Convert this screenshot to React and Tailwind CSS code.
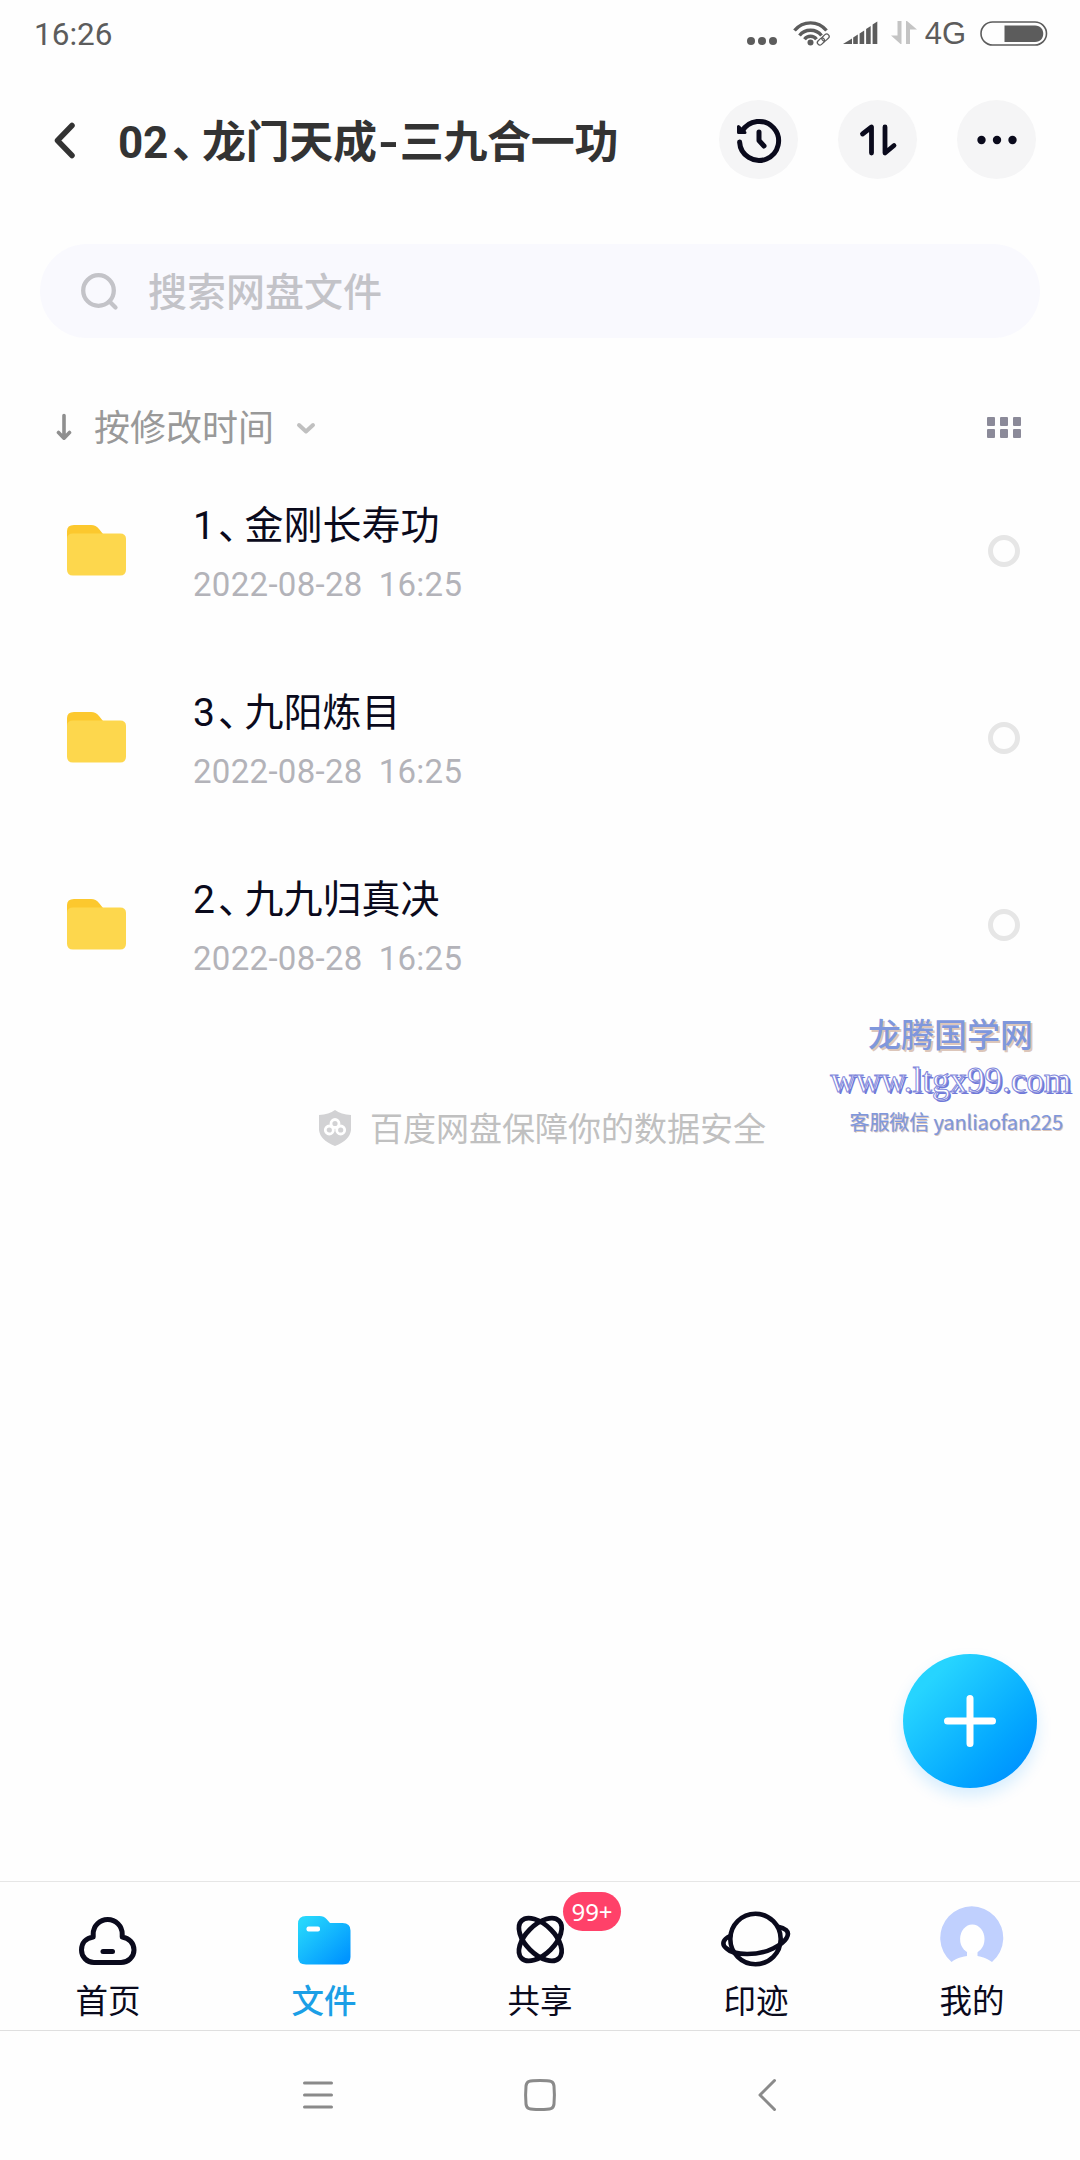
import React from "react";

const files = [
  { id: 1, index: "1", name: "金刚长寿功", date: "2022-08-28", time: "16:25" },
  { id: 2, index: "3", name: "九阳炼目", date: "2022-08-28", time: "16:25" },
  { id: 3, index: "2", name: "九九归真决", date: "2022-08-28", time: "16:25" },
];

function StatusBar() {
  return (
    <div className="h-[68px] pl-[34px] pr-[32px] flex items-center justify-between text-[#5c5c5c]">
      <span className="pt-px text-[31.5px] leading-8">16:26</span>
      <div className="flex items-center">
        <svg width="30" height="28" viewBox="0 0 30 28" fill="#5c5c5c" className="mr-4">
          <circle cx="4" cy="21" r="4" />
          <circle cx="15" cy="21" r="4" />
          <circle cx="26" cy="21" r="4" />
        </svg>
        {/* Wifi with link */}
        <svg width="38" height="28" viewBox="0 0 38 28" fill="none" className="mr-[12px]">
          <g stroke="#5c5c5c" strokeWidth="3.4">
            <path d="M1.5 10.5C10 .3 25 .3 33.5 10.5" />
            <path d="M6.5 15.5C12 8.5 23 8.5 28.5 15.5" />
            <path d="M11.5 19.3C14.5 15.3 20.5 15.3 23.5 19.3" />
          </g>
          <circle cx="17.5" cy="22.5" r="3" fill="#5c5c5c" />
          <g stroke="#5c5c5c" strokeWidth="1.3">
            <rect x="24" y="19" width="8" height="5" rx="2.5" transform="rotate(-42 28 21.5)" />
            <rect x="28.5" y="15" width="8" height="5" rx="2.5" transform="rotate(-42 32.5 17.5)" />
          </g>
        </svg>
        <svg width="35" height="28" viewBox="0 0 35 28" fill="#5c5c5c" className="mr-[13px]">
          <path d="M0 24L9 18.5V24Z" />
          <path d="M10.2 17.5L14.8 14.5V24H10.2Z" />
          <path d="M16.6 13.5L21.2 10.5V24H16.6Z" />
          <path d="M23.1 9L27.7 6V24H23.1Z" />
          <path d="M29.6 4.5L34.3 1.5V24H29.6Z" />
        </svg>
        <svg width="26" height="28" viewBox="0 0 26 28" fill="#c4c4c4" className="mr-[8px]">
          <path d="M6.5 1H10.5V24H9.5L0 15.5H6.5Z" />
          <path d="M15 1H16L26 9.5H19V24H15Z" />
        </svg>
        <span className="font-['Liberation_Sans',sans-serif] text-[31px] leading-8 mr-[14px]">4G</span>
        <svg width="68" height="26" viewBox="0 0 68 26" fill="none">
          <rect x="1" y="1" width="65.5" height="23" rx="11.5" stroke="#5c5c5c" strokeWidth="1.6" />
          <path d="M24.5 4.5H55C66 4.5 66 21 55 21H24.5Z" fill="#5c5c5c" />
        </svg>
      </div>
    </div>
  );
}

function Header() {
  return (
    <header className="h-36 pl-[53px] pr-11 pb-px flex items-center">
      <svg width="22" height="40" viewBox="0 0 22 40" fill="none" stroke="#333" strokeWidth="5.5" strokeLinecap="round" strokeLinejoin="round">
        <path d="M19 5.5L4.5 20.5L19 35.5" />
      </svg>
      <h1 className="ml-[43px] pt-[6px] flex-1 whitespace-nowrap text-[44px] leading-[60px] tracking-[-0.3px] font-bold text-[#333]">
        02<span className="ml-1 tracking-[-14px]">、</span>龙门天成
        <span className="inline-block w-[23px] text-center scale-x-125">-</span>三九合一功
      </h1>
      <div className="flex gap-10">
        <button className="size-[79px] rounded-full bg-[#f5f5f6] flex items-center justify-center">
          <svg width="48" height="48" viewBox="0 0 48 48" fill="none" stroke="#0a0a1c" strokeWidth="5" strokeLinecap="round" strokeLinejoin="round">
            <path d="M7 15.5A19.5 19.5 0 1 1 4.6 26" />
            <path d="M3.5 10.5V16.5H10Z" fill="#0a0a1c" strokeWidth="3" />
            <path d="M24 16V24.5L29 30" />
          </svg>
        </button>
        <button className="size-[79px] rounded-full bg-[#f5f5f6] flex items-center justify-center">
          <svg width="40" height="36" viewBox="0 0 40 36" fill="none" stroke="#0a0a1c" strokeWidth="4.8" strokeLinecap="round" strokeLinejoin="round">
            <path d="M4.5 12L13.5 5V31" />
            <path d="M27 5V31L36 23.5" />
          </svg>
        </button>
        <button className="size-[79px] rounded-full bg-[#f5f5f6] flex items-center justify-center">
          <svg width="40" height="10" viewBox="0 0 40 10" fill="#0a0a1c">
            <circle cx="4.5" cy="5" r="4.2" />
            <circle cx="20" cy="5" r="4.2" />
            <circle cx="35.5" cy="5" r="4.2" />
          </svg>
        </button>
      </div>
    </header>
  );
}

function SearchBar() {
  return (
    <div className="mt-8 mx-10 h-[94px] rounded-full bg-[#f9f9fe] pl-10 flex items-center">
      <svg width="40" height="40" viewBox="0 0 40 40" fill="none" stroke="#c3c3c8" strokeWidth="4.3" strokeLinecap="round">
        <circle cx="18.5" cy="19.5" r="15.3" />
        <path d="M29.5 30.5L35.5 36.5" />
      </svg>
      <span className="ml-7 pt-[3px] text-[39px] leading-[48px] font-medium text-[#c3c3c8]">搜索网盘文件</span>
    </div>
  );
}

function SortRow() {
  return (
    <div className="mt-[59px] h-[60px] pl-[56px] pr-[59px] flex items-center text-[#999]">
      <svg width="16" height="28" viewBox="0 0 16 28" fill="none" stroke="#8f8f8f" strokeWidth="3.6" strokeLinecap="round" strokeLinejoin="round">
        <path d="M8 2.5V25M2.5 19.5L8 25.2L13.5 19.5" />
      </svg>
      <span className="ml-[22px] pt-[4px] text-[36px] leading-[44px]">按修改时间</span>
      <svg width="20" height="14" viewBox="0 0 20 14" fill="none" stroke="#c0c0c0" strokeWidth="4" strokeLinecap="round" strokeLinejoin="round" className="ml-[22px] mt-[2px]">
        <path d="M3 4L10 10.5L17 4" />
      </svg>
      <div className="ml-auto mt-px grid grid-cols-3 gap-x-[4.5px] gap-y-[3.5px]">
        {[0, 1, 2, 3, 4, 5].map((n) => (
          <span key={n} className="size-[8.5px] rounded-[1px] bg-[#8b8a99]" />
        ))}
      </div>
    </div>
  );
}

function FileRow({ file }) {
  return (
    <li className="h-[187px] pl-[67px] pr-[60px] flex items-center">
      <svg width="59" height="54" viewBox="0 0 59 54">
        <path d="M0 7Q0 1 7 1H24Q29 1 32 5L36 10V20H0Z" fill="#fcc82e" />
        <path d="M0 15Q0 9.5 6 9.5H53Q59 9.5 59 15V45.5Q59 51.5 53 51.5H6Q0 51.5 0 45.5Z" fill="#fdd74d" />
      </svg>
      <div className="ml-[67px] pt-[8px] flex flex-col">
        <span className="text-[39px] leading-[48px] text-[#0a0a1c]">
          {file.index}
          <span className="ml-[3px] tracking-[-12.5px]">、</span>
          {file.name}
        </span>
        <span className="mt-3 text-[33px] leading-[46px] tracking-[0.3px] text-[#b3b3b9] flex gap-4">
          <span>{file.date}</span>
          <span>{file.time}</span>
        </span>
      </div>
      <span className="ml-auto size-8 rounded-full border-[5px] border-[#e6e6e6]" />
    </li>
  );
}

function SafetyNote() {
  return (
    <div className="mt-[78px] h-16 pl-[319px] flex items-center">
      <svg width="32" height="36" viewBox="0 0 32 36" fill="none">
        <path d="M16 0Q22 4.5 32 5V20Q31 30 16 36Q1 30 0 20V5Q10 4.5 16 0Z" fill="#d2d2d4" />
        <g stroke="#fff" strokeWidth="2.8">
          <circle cx="16" cy="13.5" r="4" />
          <circle cx="10.3" cy="20" r="4" />
          <circle cx="21.7" cy="20" r="4" />
        </g>
      </svg>
      <span className="ml-[19px] pt-[3px] text-[33px] leading-10 text-[#c0c0c0]">百度网盘保障你的数据安全</span>
    </div>
  );
}

function Watermark() {
  return (
    <div className="absolute top-[1011px] right-[9px] flex flex-col items-center font-['Noto_Sans_CJK_SC',sans-serif] text-[#7f97dc] whitespace-nowrap">
      <span className="text-[33px] leading-[44px] font-medium [text-shadow:2px_2px_0_#dcc6ba]">龙腾国学网</span>
      <span className="mt-[3px] text-[35px] leading-[46px] text-white font-['Liberation_Serif',serif] [-webkit-text-stroke:1px_#8288dc] [text-shadow:2px_2px_0_#6f78d8]">
        www.ltgx99.com
      </span>
      <span className="self-end mr-[8px] text-[20px] leading-[36px] tracking-[-0.1px] [-webkit-text-stroke:0.2px_#7f97dc] [text-shadow:1px_1px_0_#dcc6ba]">
        客服微信 yanliaofan225
      </span>
    </div>
  );
}

function AddButton() {
  return (
    <button className="absolute left-[903px] top-[1654px] size-[134px] rounded-full bg-linear-to-br from-[#26d4ff] from-20% to-[#0096ff] to-85% shadow-[0_8px_16px_rgba(0,150,255,0.16)] flex items-center justify-center">
      <svg width="52" height="52" viewBox="0 0 52 52" stroke="#fff" strokeWidth="7" strokeLinecap="round">
        <path d="M26 3.5V48.5M3.5 26H48.5" />
      </svg>
    </button>
  );
}

function TabItem({ label, active, badge, children }) {
  return (
    <div className="flex-1 flex flex-col items-center pt-[22px]">
      <div className="relative h-[78px]">
        {children}
        {badge && (
          <span className="absolute left-[59px] top-[-12px] w-[58px] h-[39px] rounded-full bg-[#ff4169] text-white text-[24px] leading-[39px] text-center font-['Noto_Sans',sans-serif]">
            {badge}
          </span>
        )}
      </div>
      <span
        className={
          active
            ? "text-[32.5px] leading-10 font-medium text-[#1b9fe6]"
            : "text-[32.5px] leading-10 text-[#0a0a1c]"
        }
      >
        {label}
      </span>
    </div>
  );
}

function TabBar() {
  return (
    <nav className="h-[149px] border-t border-[#e6e6e6] flex">
      <TabItem label="首页">
        <svg width="72" height="70" viewBox="0 0 72 70" fill="none" stroke="#0a0a1c" strokeWidth="5" strokeLinecap="round" strokeLinejoin="round">
          <path d="M21.2 33V30A14.5 14.5 0 0 1 50.2 30V33C57 34 62 39 62 46C62 53 56 58.5 49 58.5H22C15 58.5 9.5 53 9.5 46C9.500 39 14 34 21.2 33Z" />
          <path d="M31 47.5H40.5" />
        </svg>
      </TabItem>
      <TabItem label="文件" active>
        <svg width="72" height="70" viewBox="0 0 72 70">
          <defs>
            <linearGradient id="tabFolder" x1="0" y1="0" x2="1" y2="1">
              <stop offset="0.1" stopColor="#26d6fc" />
              <stop offset="0.9" stopColor="#0095ff" />
            </linearGradient>
          </defs>
          <path d="M10 20Q10 12 18 12H31.5Q36 12 38.5 15L42 19H54.5Q62.5 19 62.5 26.5V53Q62.5 60.5 54.5 60.5H18Q10 60.5 10 53Z" fill="url(#tabFolder)" />
          <rect x="18.5" y="22.5" width="13.5" height="5" rx="2" fill="#fff" />
        </svg>
      </TabItem>
      <TabItem label="共享" badge="99+">
        <svg width="72" height="70" viewBox="0 0 72 70" fill="none" stroke="#0a0a1c" strokeWidth="4.8">
          <ellipse cx="36.3" cy="35.5" rx="26.5" ry="14.5" transform="rotate(45 36.3 35.5)" />
          <ellipse cx="36.3" cy="35.5" rx="26.5" ry="14.5" transform="rotate(-45 36.3 35.5)" />
        </svg>
      </TabItem>
      <TabItem label="印迹">
        <svg width="72" height="70" viewBox="0 0 72 70" fill="none" stroke="#0a0a1c" strokeWidth="4.6" strokeLinecap="round">
          <circle cx="35.5" cy="35" r="25.2" />
          <path d="M10 32C3 35 1.5 40.5 6 44C14 52 38 52 53 44.5C67 38 70.5 30 66 26C64 24.5 62 23.5 59 23" />
        </svg>
      </TabItem>
      <TabItem label="我的">
        <svg width="72" height="70" viewBox="0 0 72 70">
          <path d="M15.5 58A31.5 31.5 0 1 1 56 58C50 53.5 44 52.5 41.5 52V47H31V52C28 52.5 21 53.5 15.5 58Z" fill="#c0d0fe" />
          <ellipse cx="36.3" cy="35" rx="12.2" ry="14.5" fill="#fff" />
        </svg>
      </TabItem>
    </nav>
  );
}

function SystemNav() {
  return (
    <div className="h-[130px] border-t border-[#dfdfdf] pl-[302px] pr-[303px] pb-[2px] flex items-center">
      <svg width="32" height="34" viewBox="0 0 32 34" stroke="#8a8a8a" strokeWidth="3" strokeLinecap="round">
        <path d="M2.5 5H29.5M2.5 17H29.5M2.5 29H29.5" />
      </svg>
      <svg width="34" height="34" viewBox="0 0 34 34" fill="none" stroke="#8a8a8a" strokeWidth="3" className="ml-[189px]">
        <path d="M17 2.5C28 2.5 30.5 3 31 8Q31.8 17 31 26C30.5 31 28 31.5 17 31.5C6 31.5 3.5 31 3 26Q2.2 17 3 8C3.5 3 6 2.5 17 2.5Z" />
      </svg>
      <svg width="20" height="34" viewBox="0 0 20 34" fill="none" stroke="#8a8a8a" strokeWidth="3" strokeLinecap="round" strokeLinejoin="round" className="ml-auto">
        <path d="M17.5 2.5L3 17L17.5 31.5" />
      </svg>
    </div>
  );
}

function App() {
  return (
    <div className="relative w-[1080px] h-[2160px] overflow-hidden bg-[#fefefe] flex flex-col font-[Roboto,'Noto_Sans_CJK_SC',sans-serif]">
      <StatusBar />
      <Header />
      <SearchBar />
      <SortRow />
      <ul>
        {files.map((file) => (
          <FileRow key={file.id} file={file} />
        ))}
      </ul>
      <SafetyNote />
      <div className="flex-1" />
      <TabBar />
      <SystemNav />
      <Watermark />
      <AddButton />
    </div>
  );
}

export default App;
